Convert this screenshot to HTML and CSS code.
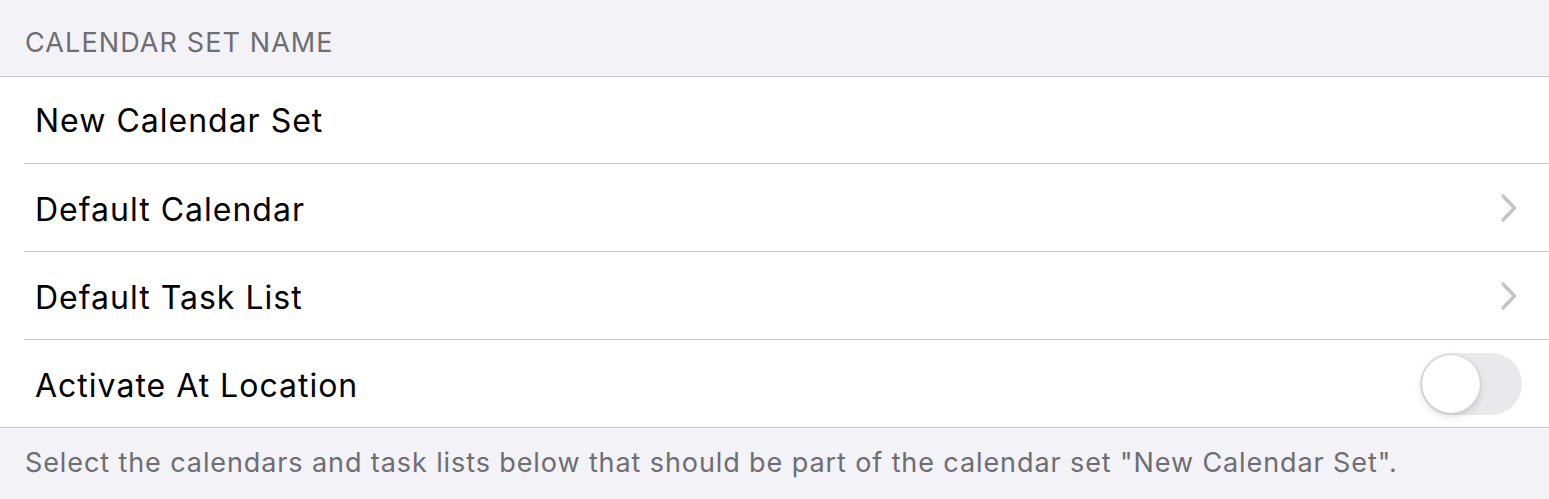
FILE: index.html
```html
<!DOCTYPE html>
<html>
<head>
<meta charset="utf-8">
<link rel="stylesheet" href="styles.css">
</head>
<body>
<div class="page">
  <div class="section-header">CALENDAR SET NAME</div>
  <div class="group">
    <div class="row first"><div class="row-inner"><span class="label">New Calendar Set</span></div></div>
    <div class="row"><div class="row-inner"><span class="label">Default Calendar</span>
      <svg class="chevron" width="20" height="30" viewBox="0 0 20 30"><path d="M4 3 L15.5 15 L4 27" fill="none" stroke="#c4c4c7" stroke-width="3.4" stroke-linecap="round" stroke-linejoin="round"/></svg>
    </div></div>
    <div class="row"><div class="row-inner"><span class="label">Default Task List</span>
      <svg class="chevron" width="20" height="30" viewBox="0 0 20 30"><path d="M4 3 L15.5 15 L4 27" fill="none" stroke="#c4c4c7" stroke-width="3.4" stroke-linecap="round" stroke-linejoin="round"/></svg>
    </div></div>
    <div class="row last"><div class="row-inner"><span class="label">Activate At Location</span>
      <div class="toggle"><div class="knob"></div></div>
    </div></div>
  </div>
  <div class="footer">Select the calendars and task lists below that should be part of the calendar set "New Calendar Set".</div>
</div>
</body>
</html>
```
FILE: styles.css
```css
html, body {
  margin: 0;
  padding: 0;
  background: #f2f2f7;
}
.page {
  width: 1549px;
  height: 499px;
  background: #f2f2f7;
  font-family: Inter, "Noto Sans", sans-serif;
  overflow: hidden;
}
.section-header {
  height: 77px;
  box-sizing: border-box;
  padding: 28px 0 0 25px;
  font-size: 27px;
  line-height: 30px;
  color: #6d6d72;
  letter-spacing: 1.1px;
  border-bottom: 1px solid #c8c7cc;
}
.group {
  background: #ffffff;
  border-bottom: 1px solid #c8c7cc;
}
.row {
  padding-left: 24px;
}
.row-inner {
  height: 87px;
  display: flex;
  align-items: center;
  justify-content: space-between;
  padding-left: 11px;
  padding-right: 27px;
  border-bottom: 1px solid #c8c7cc;
}
.row.first .row-inner {
  height: 86px;
}
.row.last .row-inner {
  border-bottom: none;
  height: 87px;
}
.label {
  font-size: 32px;
  color: #000000;
  letter-spacing: 1px;
  padding-top: 3px;
}
.row.first .label {
  padding-top: 0;
}
.chevron {
  display: block;
  margin-right: 3px;
}
.toggle {
  width: 102px;
  height: 62px;
  border-radius: 31px;
  background: #e9e9eb;
  position: relative;
}
.knob {
  position: absolute;
  left: 2px;
  top: 2px;
  width: 58px;
  height: 58px;
  border-radius: 50%;
  background: #ffffff;
  box-shadow: 0 3px 8px rgba(0,0,0,0.15), 0 0 0 1px rgba(0,0,0,0.06);
}
.footer {
  padding: 19px 0 0 25px;
  font-size: 27px;
  line-height: 32px;
  color: #6d6d72;
  letter-spacing: 0.9px;
}
```
